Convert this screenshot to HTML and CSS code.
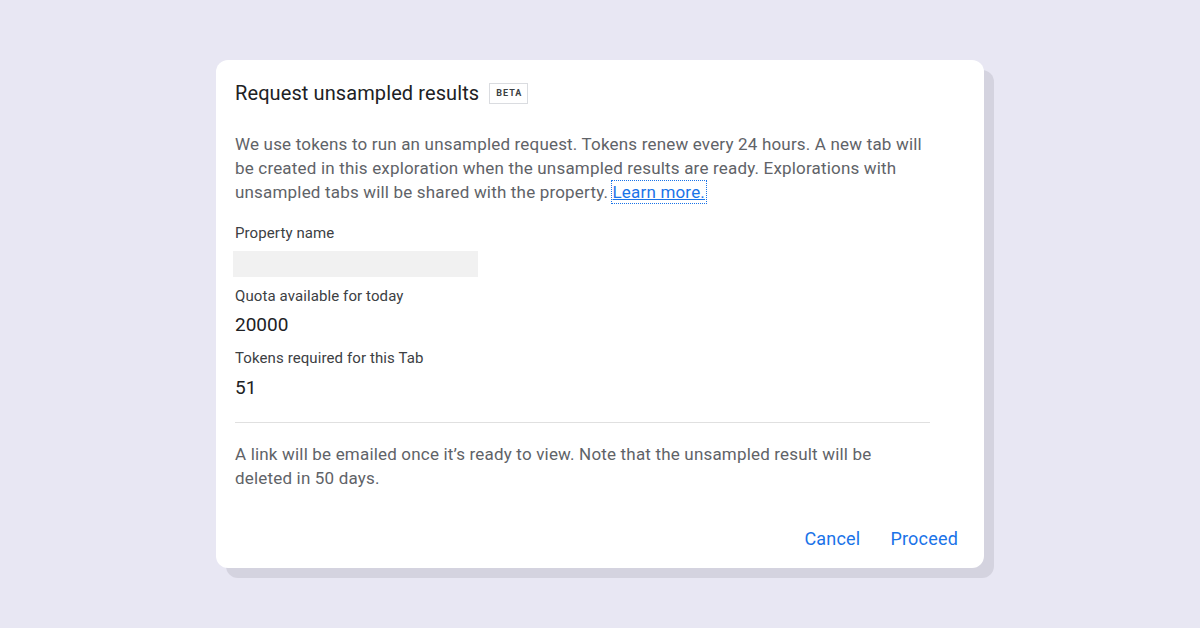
FILE: index.html
```html
<!DOCTYPE html>
<html lang="en">
<head>
<meta charset="utf-8">
<title>Request unsampled results</title>
<link rel="stylesheet" href="styles.css">
</head>
<body>
<div class="stage">
  <div class="dialog">
    <div class="head">
      <h1 class="title">Request unsampled results</h1>
      <span class="badge">BETA</span>
    </div>
    <div class="content">
      <p class="intro">We use tokens to run an unsampled request. Tokens renew every 24 hours. A new tab will be created in this exploration when the unsampled results are ready. Explorations with unsampled tabs will be shared with the property. <a class="link" href="#">Learn more.</a></p>
      <div class="field first">
        <div class="label">Property name</div>
        <div class="placeholder"></div>
      </div>
      <div class="field">
        <div class="label">Quota available for today</div>
        <div class="value">20000</div>
      </div>
      <div class="field">
        <div class="label">Tokens required for this Tab</div>
        <div class="value">51</div>
      </div>
      <hr class="divider">
      <p class="note">A link will be emailed once it’s ready to view. Note that the unsampled result will be deleted in 50 days.</p>
    </div>
    <div class="actions">
      <button class="btn">Cancel</button>
      <button class="btn">Proceed</button>
    </div>
  </div>
</div>
</body>
</html>
```
FILE: styles.css
```css
* { box-sizing: border-box; }
html, body { margin: 0; padding: 0; }
body {
  width: 1200px;
  height: 628px;
  background: #e8e7f3;
  font-family: Roboto, "Noto Sans", "Liberation Sans", sans-serif;
  overflow: hidden;
}
.stage {
  width: 1200px;
  height: 628px;
  display: flex;
  align-items: center;
  justify-content: center;
}
.dialog {
  width: 768px;
  height: 508px;
  background: #fff;
  border-radius: 12px;
  box-shadow: 10px 10px 0 0 #d4d3df;
  padding: 19px 18px 12px 19px;
  display: flex;
  flex-direction: column;
}
.head {
  display: flex;
  align-items: center;
  gap: 10px;
  height: 28px;
}
.title {
  margin: 0;
  font-size: 20px;
  line-height: 28px;
  font-weight: 400;
  color: #202124;
  letter-spacing: 0.1px;
}
.badge {
  border: 1px solid #dadce0;
  font-size: 9px;
  font-weight: 700;
  letter-spacing: 1px;
  color: #3c4043;
  padding: 4px 5px 4px 6px;
  line-height: 11px;
}
.content {
  width: 696px;
  padding-top: 25px;
}
.intro, .note {
  margin: 0;
  font-size: 17px;
  line-height: 24px;
  color: #5f6368;
  letter-spacing: 0.18px;
}
.note { width: 688px; }
.link {
  color: #1a73e8;
  text-decoration: underline;
  outline: 1px dotted #1a73e8;
  outline-offset: 1px;
}
.field { margin-top: 9px; }
.field.first { margin-top: 19px; }
.field + .field + .field { margin-top: 11px; }
.label {
  font-size: 15px;
  line-height: 20px;
  color: #3c4043;
  letter-spacing: 0.1px;
}
.placeholder {
  width: 245px;
  height: 26px;
  margin: 8px 0 0 -2px;
  background: #f1f1f1;
}
.value {
  margin-top: 7px;
  font-size: 19px;
  line-height: 24px;
  color: #202124;
}
.field + .field + .field .value { margin-top: 8px; }
.divider {
  border: 0;
  border-top: 1px solid #e0e0e0;
  margin: 22px 0 0;
  width: 695px;
}
.note { margin-top: 19px; }
.actions {
  margin-top: auto;
  display: flex;
  justify-content: flex-end;
  gap: 14px;
}
.btn {
  background: none;
  border: 0;
  padding: 0 8px;
  height: 36px;
  font-family: Roboto, "Noto Sans", "Liberation Sans", sans-serif;
  font-size: 18px;
  font-weight: 400;
  color: #1a73e8;
  letter-spacing: 0.2px;
  cursor: pointer;
}
```
